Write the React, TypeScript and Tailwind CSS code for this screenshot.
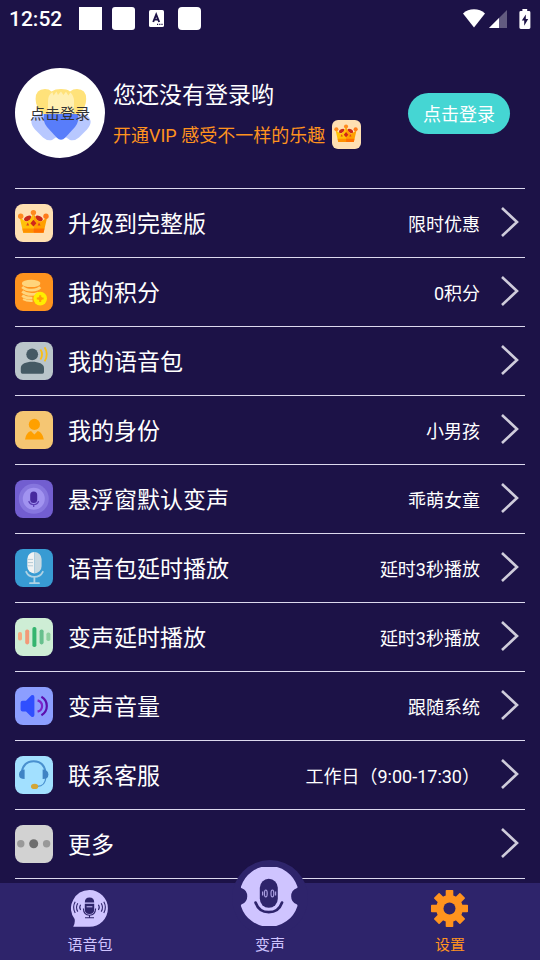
import type { ReactNode } from "react";
import { useState } from "react";

interface Setting {
  id: string;
  label: string;
  value?: string;
  tile: string;
  icon: ReactNode;
}

function CrownArt() {
  return (
    <>
      <ellipse cx="12.8" cy="14.4" rx="4" ry="2.4" fill="#c9281c" transform="rotate(-28 12.8 14.4)" />
      <ellipse cx="24" cy="14.4" rx="4" ry="2.4" fill="#c9281c" transform="rotate(28 24 14.4)" />
      <path d="M4.6 13L9 16.5Q12 19 15 15.5L18.4 9V28.8H8.2Z" fill="#ffc107" />
      <path d="M32.2 13L27.8 16.5Q24.8 19 21.8 15.5L18.4 9V28.8H28.6Z" fill="#ffa000" />
      <path d="M7.4 24.6H18.4V28.8H8.2Z" fill="#ff9100" />
      <path d="M18.4 24.6H29.4L28.6 28.8H18.4Z" fill="#ff6f00" />
      <circle cx="5.7" cy="12.2" r="2.7" fill="#ff8a1f" />
      <circle cx="18.4" cy="8.6" r="2.7" fill="#ff8a1f" />
      <circle cx="31" cy="12.2" r="2.7" fill="#ff7a1a" />
      <path d="M18.4 15.8L21.4 19.2L18.4 22.6L15.4 19.2Z" fill="#d0261a" />
      <path d="M12.8 18.6L14.2 21.6H11.2Z" fill="#e0401c" />
      <path d="M24 18.6L25.6 21.6H22.6Z" fill="#e0401c" />
    </>
  );
}

const SETTINGS: Setting[] = [
  {
    id: "upgrade",
    label: "升级到完整版",
    value: "限时优惠",
    tile: "bg-[#ffe0b2]",
    icon: <CrownArt />,
  },
  {
    id: "points",
    label: "我的积分",
    value: "0积分",
    tile: "bg-[#ff931e]",
    icon: (
      <>
        <path d="M7 9.8a9 3 0 0 1 18.2 0v1.2a9 3 0 0 1-18.2 0z" fill="#ffd57c" />
        <g fill="none" stroke="#ffd57c" strokeWidth="2.8">
          <path d="M7.2 14Q11 17.4 17 17.2T25.2 14.2" />
          <path d="M7.2 18.4Q11 21.6 17 21.4T24 19.4" />
          <path d="M7.2 22.6Q11 25.4 17.4 25.2" />
          <path d="M8 26.2Q12 28.4 17.6 28" strokeWidth="2" />
        </g>
        <circle cx="25.2" cy="25.6" r="6.8" fill="#ffee00" />
        <path d="M25.2 22.2V29M21.8 25.6H28.6" stroke="#ff9d0a" strokeWidth="2" />
        <circle cx="25.2" cy="25.6" r="2" fill="#ff9d0a" />
      </>
    ),
  },
  {
    id: "voice-packs",
    label: "我的语音包",
    tile: "bg-[#bac5ca]",
    icon: (
      <>
        <circle cx="17.2" cy="12.3" r="5.9" fill="#455a64" />
        <path d="M5.8 30V26C5.8 22 11 19.8 17.3 19.8S29 22 29 26V30Q29 31.7 27.4 31.7H7.4Q5.8 31.7 5.8 30Z" fill="#455a64" />
        <path d="M25.4 7.4Q28.8 12.2 25.4 17.4M29.6 5.2Q34 12.2 29.6 19.4" fill="none" stroke="#f9bf16" strokeWidth="1.8" />
      </>
    ),
  },
  {
    id: "identity",
    label: "我的身份",
    value: "小男孩",
    tile: "bg-[#f5c673]",
    icon: (
      <g fill="#ffa000">
        <circle cx="19.4" cy="13.4" r="5.6" />
        <path d="M10 28.4Q11 21.6 16 20L19.4 23.4L22.8 20Q27.6 21.6 28.8 28.4Z" />
      </g>
    ),
  },
  {
    id: "float-window",
    label: "悬浮窗默认变声",
    value: "乖萌女童",
    tile: "bg-[#725ed0]",
    icon: (
      <>
        <circle cx="18.8" cy="18.8" r="15" fill="#8676de" />
        <circle cx="18.8" cy="18.8" r="11" fill="#a193f0" />
        <rect x="15.2" y="11.4" width="7" height="11.6" rx="3.5" fill="#472a9e" />
        <path d="M13.8 21Q14.6 24.6 18.7 24.6T23.6 21M18.7 24.6V27" fill="none" stroke="#5b3fb4" strokeWidth="1.2" />
      </>
    ),
  },
  {
    id: "pack-delay",
    label: "语音包延时播放",
    value: "延时3秒播放",
    tile: "bg-[#389bd3]",
    icon: (
      <>
        <path d="M19.4 3A7.1 7.1 0 0 0 12.3 10V17.3A7.1 7.1 0 0 0 19.4 24.4Z" fill="#f1f3f3" />
        <path d="M19.4 3A7.1 7.1 0 0 1 26.6 10V17.3A7.1 7.1 0 0 1 19.4 24.4Z" fill="#c8d9e1" />
        <path d="M12.3 10.4H18M12.3 13.6H18M12.3 16.8H18" stroke="#b6cbd6" strokeWidth="1" />
        <path d="M11.2 22.8Q13.4 27.8 19.4 27.8T27.8 22.8M19.4 27.8V34M15 34.2H24" fill="none" stroke="#b0d3e4" strokeWidth="1.8" strokeLinecap="round" />
      </>
    ),
  },
  {
    id: "voice-delay",
    label: "变声延时播放",
    value: "延时3秒播放",
    tile: "bg-[#ceedd5]",
    icon: (
      <>
        <rect x="3" y="14" width="4" height="8.6" rx="1.8" fill="#f5ab80" />
        <rect x="10.2" y="11.4" width="4" height="15" rx="1.8" fill="#f29a78" />
        <rect x="17.4" y="9" width="4" height="20" rx="1.8" fill="#35b56f" />
        <rect x="24.6" y="11.4" width="4" height="15" rx="1.8" fill="#67c08d" />
        <rect x="31.4" y="14.4" width="4" height="8.6" rx="1.8" fill="#8ccf9e" />
      </>
    ),
  },
  {
    id: "volume",
    label: "变声音量",
    value: "跟随系统",
    tile: "bg-[#8c9eff]",
    icon: (
      <>
        <path d="M7.6 13.8H11L16.4 8.2Q19.4 7.4 19.4 10V28Q19.4 30.6 16.4 29.8L11 24.4H7.6Q5.6 24.4 5.6 22.4V15.8Q5.6 13.8 7.6 13.8Z" fill="#304ffe" />
        <g fill="none" strokeWidth="2.2">
          <path d="M22.6 13.4C28.6 15 28.6 23 22.6 24.6" stroke="#7a24c9" />
          <path d="M26.4 9.8C33.6 14 33.6 24 26.4 28.2" stroke="#5c0fae" />
        </g>
      </>
    ),
  },
  {
    id: "support",
    label: "联系客服",
    value: "工作日（9:00-17:30）",
    tile: "bg-[#a2e0ff]",
    icon: (
      <>
        <path d="M6.8 16C8 8.6 12.4 5.2 18.6 5.2S29.4 8.6 30.4 16" fill="none" stroke="#4a90cf" strokeWidth="2" />
        <path d="M31 21C30.4 27 27.4 30.8 21.6 30.4" fill="none" stroke="#4a90cf" strokeWidth="1.2" />
        <path d="M9.6 13.4V23Q4 23 4 18.4T9.6 13.4Z" fill="#3f83c4" />
        <path d="M27.6 13.4V23Q33.4 23 33.4 18.4T27.6 13.4Z" fill="#3f83c4" />
        <ellipse cx="19.6" cy="30.4" rx="3.6" ry="2.7" fill="#d3a535" />
      </>
    ),
  },
  {
    id: "more",
    label: "更多",
    tile: "bg-[#d2d2d2]",
    icon: (
      <>
        <circle cx="5.8" cy="18.8" r="3.7" fill="#999999" />
        <circle cx="18.7" cy="18.8" r="4.5" fill="#6e6e6e" />
        <circle cx="31.6" cy="18.8" r="3.7" fill="#999999" />
      </>
    ),
  },
];

function StatusBar() {
  return (
    <div className="flex h-9 items-center px-[9px] pt-px">
      <span className="w-[70px] text-[21px] leading-6 font-medium">12:52</span>
      <span className="size-[23px] bg-white" />
      <span className="ml-[10px] size-[23px] rounded-[3px] bg-white" />
      <svg className="ml-[14px]" width="15" height="17" viewBox="0 0 15 17" aria-hidden="true">
        <rect width="15" height="17" rx="1.6" fill="#fff" />
        <path d="M4.2 12L7.2 4.6L10.2 12M5.2 9.6H9.2" fill="none" stroke="#1c1247" strokeWidth="1.9" />
        <path d="M8 14.4H9.2M10.2 14.4H11.4M12.4 14.4H13.6" stroke="#1c1247" strokeWidth="1.2" />
      </svg>
      <span className="ml-[14px] size-[23px] rounded-[4px] bg-white" />
      <div className="ml-auto flex items-center">
        <svg width="22" height="19" viewBox="0 0 22 19" aria-hidden="true">
          <path d="M0 4.4Q4.6 0.2 11 0.2T22 4.4L11 18.4Z" fill="#fff" />
        </svg>
        <svg className="ml-1" width="18" height="18" viewBox="0 0 18 18" aria-hidden="true">
          <path d="M18 0V18H0Z" fill="#625b80" />
          <path d="M10 8V18H0Z" fill="#fff" />
        </svg>
        <svg className="ml-3" width="12" height="20" viewBox="0 0 12 20" aria-hidden="true">
          <path d="M3.4 0H8.2V2H10Q11.4 2 11.4 3.4V18.6Q11.4 20 10 20H1.8Q0.4 20 0.4 18.6V3.4Q0.4 2 1.8 2H3.4Z" fill="#fff" />
          <path d="M6.8 5.4L2.8 11.6H5.2V16.8L9.2 10H6.8Z" fill="#1c1247" />
        </svg>
      </div>
    </div>
  );
}

function Avatar() {
  return (
    <button className="relative size-[90px] shrink-0 overflow-hidden rounded-full bg-white">
      <svg className="size-full" viewBox="0 0 90 90" aria-hidden="true">
        <path d="M20.6 31Q20.6 21 30 21Q34 21 36.5 23.4Q40 21 46 21T55 23.4Q58 21 62 21Q71.2 21 71.2 31Q71.2 40 64 46H28Q20.6 40 20.6 31Z" fill="#ffe27a" />
        <path d="M33 46V33Q33 27 37.4 24.2L38.6 27.4L41.4 23.6L43 27L46 23.4L48.4 27L51 23.8L53.4 27.4L55.4 24.6Q59 28 59 33V46Z" fill="#fff0b3" />
        <path d="M16.4 53Q18 46 26 46H66Q74 46 75.6 53Q76 57 72 61.4L64 69.4Q60 73 55 72L46 66L37 72Q32 73 28 69.4L20 61.4Q16 57 16.4 53Z" fill="#b8c8ff" />
        <path d="M29 46H63Q64.4 54 60 59L50.4 69.4Q46 74 41.6 69.4L32 59Q27.6 54 29 46Z" fill="#587dfa" />
      </svg>
      <span className="absolute inset-0 flex items-center justify-center pt-0.5 text-[15px] text-[#333333]">
        点击登录
      </span>
    </button>
  );
}

function Chevron() {
  return (
    <svg className="mr-[6px] mb-0.5 ml-5 shrink-0" width="19" height="30" viewBox="0 0 19 30" aria-hidden="true">
      <path d="M2 1L17 15L2 29" fill="none" stroke="#cfccdb" strokeWidth="2.6" />
    </svg>
  );
}

function VoicePackIcon() {
  return (
    <svg width="38" height="37" viewBox="0 0 38 37" aria-hidden="true">
      <path d="M18.5 0A18.3 18.3 0 0 1 18.5 36.8H2.2Q4.4 33 3.6 29A18.3 18.3 0 0 1 18.5 0Z" fill="#cfc4ff" />
      <path d="M13.8 12.4Q13.8 7.4 18.5 7.4T23.2 12.4Z" fill="#2e246b" />
      <path d="M13.8 13.8H23.2V19.6Q23.2 24 18.5 24T13.8 19.6Z" fill="#2e246b" />
      <path d="M15.6 16.8H21.4" stroke="#cfc4ff" strokeWidth="1" />
      <g fill="none" stroke="#2e246b" strokeWidth="1.1">
        <path d="M12.4 18.6Q12.6 25.2 18.5 25.2T24.6 18.6M18.5 25.2V27.6M14 27.8H23" />
        <path d="M9.6 14.8Q7.8 17.4 9.6 20M6.8 13.2Q4.2 17.4 6.8 21.6M4.2 11.8Q1 17.4 4.2 23" />
        <path d="M27.4 14.8Q29.2 17.4 27.4 20M30.2 13.2Q32.8 17.4 30.2 21.6M32.8 11.8Q36 17.4 32.8 23" />
      </g>
    </svg>
  );
}

function VoiceChangeIcon() {
  return (
    <svg width="60" height="59" viewBox="0 0 60 59" aria-hidden="true">
      <path d="M1 19.6A29.6 29.6 0 0 1 57.4 19.6Q57.8 20.8 56.6 21.2A8.6 8.6 0 0 0 56.6 37.2Q57.8 37.8 57.4 39.2A29.6 29.6 0 0 1 1 39.2Q0.6 37.8 1.8 37.2A8.6 8.6 0 0 0 1.8 21.2Q0.6 20.8 1 19.6Z" fill="#cfc4ff" />
      <rect x="19.8" y="11.8" width="18" height="29" rx="9" fill="#2e246b" />
      <path d="M15.6 35.6Q19 45.2 28.8 45.2T42 35.6" fill="none" stroke="#2e246b" strokeWidth="2.8" strokeLinecap="round" />
      <g fill="none" stroke="#a99de0" strokeWidth="1.2">
        <path d="M22.6 24.4V28.4M35.6 24.4V28.4" />
        <ellipse cx="25.8" cy="26.4" rx="1.4" ry="3.4" />
        <ellipse cx="32.4" cy="26.4" rx="1.4" ry="3.4" />
      </g>
    </svg>
  );
}

function GearIcon() {
  return (
    <svg width="38" height="37" viewBox="0 0 38 37" aria-hidden="true">
      <g fill="#ff931e">
        {[0, 45, 90, 135].map((angle) => (
          <rect key={angle} x="14.7" y="0" width="7.6" height="37" rx="0.8" transform={`rotate(${angle} 18.5 18.5)`} />
        ))}
        <circle cx="18.5" cy="18.5" r="13.4" />
      </g>
      <circle cx="18.5" cy="18.5" r="6" fill="#2e246b" />
    </svg>
  );
}

function BottomNav() {
  const [tab, setTab] = useState("settings");
  const tone = (id: string) => (tab === id ? "text-[#ff931e]" : "text-[#cfc4ff]");
  const current = (id: string) => (tab === id ? "page" : undefined);

  return (
    <nav className="sticky bottom-0 grid h-[77px] grid-cols-3 bg-[#2e246b] text-[15px] leading-5">
      <button
        onClick={() => setTab("packs")}
        aria-current={current("packs")}
        className={`flex flex-col items-center gap-2 pt-[7px] ${tone("packs")}`}
      >
        <VoicePackIcon />
        语音包
      </button>
      <button
        onClick={() => setTab("change")}
        aria-current={current("change")}
        className={`relative flex flex-col items-center justify-end pb-[5px] ${tone("change")}`}
      >
        {/* Raised disc over the bar's top edge */}
        <span className="absolute -top-[23px] left-1/2 flex size-[76px] -translate-x-1/2 justify-center rounded-full bg-[#2e246b] pt-[7px]">
          <VoiceChangeIcon />
        </span>
        <span className="relative">变声</span>
      </button>
      <button
        onClick={() => setTab("settings")}
        aria-current={current("settings")}
        className={`flex flex-col items-center gap-2 pt-[7px] ${tone("settings")}`}
      >
        <GearIcon />
        设置
      </button>
    </nav>
  );
}

export default function App() {
  return (
    <div className="flex min-h-screen flex-col bg-[#1c1247] font-[Roboto,'Noto_Sans_CJK_SC',sans-serif] text-white">
      <StatusBar />

      <main className="flex-1 px-[15px] pt-8 pb-1">
        {/* Profile */}
        <header className="flex items-center pr-[15px] pb-[30px]">
          <Avatar />
          <div className="ml-2 flex-1">
            <h1 className="pt-1 text-[23px] leading-8">您还没有登录哟</h1>
            <a href="#vip" className="mt-1.5 flex items-center gap-[7px] text-[18px] leading-7 text-[#ff931e]">
              <span className="pt-1">开通VIP 感受不一样的乐趣</span>
              <span className="size-[29px] shrink-0 rounded-md bg-[#ffe0b2]">
                <svg className="size-full" viewBox="0 0 38 38" aria-hidden="true">
                  <CrownArt />
                </svg>
              </span>
            </a>
          </div>
          <button className="h-[41px] w-[102px] shrink-0 rounded-full bg-[#45d6d3] pt-0.5 text-[18px]">
            点击登录
          </button>
        </header>

        {/* Settings list */}
        <ul className="border-t border-[#dcd9ee]">
          {SETTINGS.map((item) => (
            <li key={item.id} className="border-b border-[#dcd9ee]">
              <button className="flex h-[68px] w-full items-center text-left">
                <span className={`size-[38px] shrink-0 rounded-lg ${item.tile}`}>
                  <svg className="size-full" viewBox="0 0 38 38" aria-hidden="true">
                    {item.icon}
                  </svg>
                </span>
                <span className="ml-[15px] flex-1 pt-1 text-[23px] leading-8">{item.label}</span>
                {item.value && <span className="pt-1 text-[18px] leading-7">{item.value}</span>}
                <Chevron />
              </button>
            </li>
          ))}
        </ul>
      </main>

      <BottomNav />
    </div>
  );
}
